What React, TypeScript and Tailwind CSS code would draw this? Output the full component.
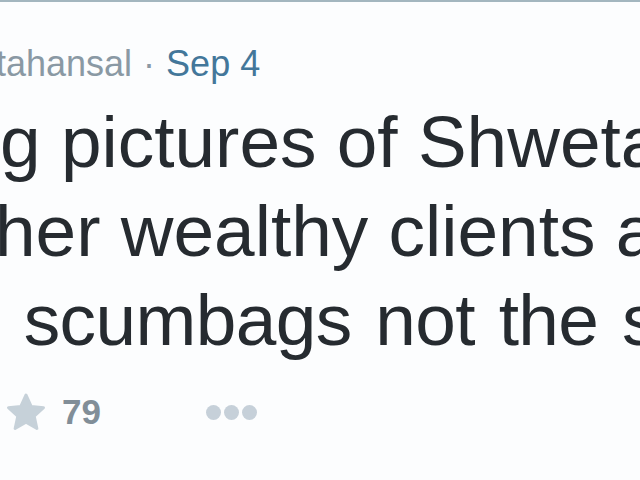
export default function App() {
  return (
    <div
      className="w-[640px] h-[480px] overflow-hidden bg-[#fcfdfe] border-t-2 border-[#a3b6bf]"
      style={{ fontFamily: '"Liberation Sans", Arial, sans-serif' }}
    >
      {/* header */}
      <div className="mt-[42px] h-[40px] flex items-center whitespace-nowrap text-[36px] leading-[40px] ml-[-4px]">
        <span className="text-[#8a99a4]">tahansal</span>
        <span className="text-[#8a99a4] mx-[11px]">·</span>
        <span className="text-[#43779a]">Sep 4</span>
      </div>

      {/* tweet text */}
      <div className="mt-[13px] text-[73px] leading-[89px] text-[#262b30] whitespace-nowrap">
        <div>g pictures of Shweta</div>
        <div className="ml-[-5px]">her wealthy clients a</div>
        <div className="tracking-[-0.6px] [word-spacing:4px]">&nbsp;scumbags not the s</div>
      </div>

      {/* actions */}
      <div className="mt-[28px] h-[40px] flex items-center">
        <svg
          viewBox="0 0 24 24"
          className="w-[46px] h-[43px] ml-[3px]"
          fill="#c6d1d9"
          stroke="#c6d1d9"
          strokeWidth={1.6}
          strokeLinejoin="round"
        >
          <path d="M12 2.2l2.9 6.4 6.9.7-5.2 4.7 1.5 6.9L12 17.4l-6.1 3.5 1.5-6.9-5.2-4.7 6.9-.7z" />
        </svg>
        <span className="ml-[13px] text-[35px] font-bold text-[#818e98] leading-[40px]">79</span>
        <div className="ml-[105px] flex gap-[3px]">
          <span className="w-[15px] h-[15px] rounded-full bg-[#c6d0d9]" />
          <span className="w-[15px] h-[15px] rounded-full bg-[#c6d0d9]" />
          <span className="w-[15px] h-[15px] rounded-full bg-[#c6d0d9]" />
        </div>
      </div>
    </div>
  );
}
